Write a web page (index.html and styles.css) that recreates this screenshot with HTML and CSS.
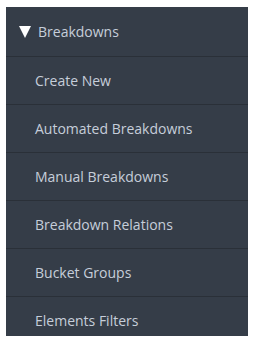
FILE: index.html
```html
<!DOCTYPE html>
<html lang="en">
<head>
  <meta charset="UTF-8">
  <title>Breakdowns</title>
  <link rel="stylesheet" href="styles.css">
</head>
<body>
  <div class="sidebar">
    <div class="section-title">
      <span class="caret"></span>
      Breakdowns
    </div>
    <div class="menu-item">Create New</div>
    <div class="menu-item">Automated Breakdowns</div>
    <div class="menu-item">Manual Breakdowns</div>
    <div class="menu-item">Breakdown Relations</div>
    <div class="menu-item">Bucket Groups</div>
    <div class="menu-item">Elements Filters</div>
  </div>
</body>
</html>
```

FILE: styles.css
```css
body {
  margin: 0;
  background-color: #ffffff;
  font-family: "Open Sans", sans-serif;
}
.sidebar {
  margin: 7px 6px 0 6px;
  height: 329px;
  overflow: hidden;
  background-color: #353d48;
  color: #c6ceda;
  font-size: 14px;
}
.section-title {
  display: flex;
  align-items: center;
  gap: 7px;
  height: 49px;
  padding-left: 13px;
  border-bottom: 1px solid #2a3038;
}
.caret {
  width: 0;
  height: 0;
  border-left: 6.5px solid transparent;
  border-right: 6.5px solid transparent;
  border-top: 12px solid #ffffff;
}
.menu-item {
  display: flex;
  align-items: center;
  height: 47px;
  padding-left: 29px;
  border-bottom: 1px solid #2a3038;
}
```
